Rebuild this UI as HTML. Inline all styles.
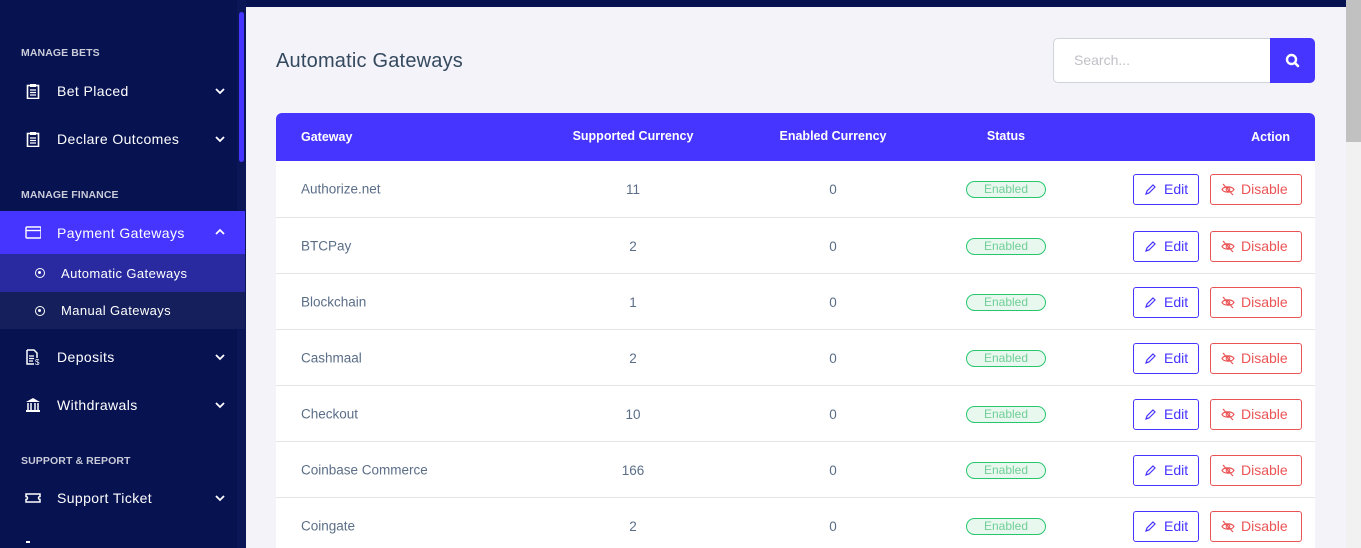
<!DOCTYPE html>
<html style="overflow:hidden"><head><meta charset="utf-8"><style>
*{box-sizing:border-box;margin:0;padding:0}
html,body{width:1361px;height:548px;overflow:hidden}
body{background:#f3f3f9;font-family:"Liberation Sans",sans-serif;position:relative}
.sb{position:absolute;left:0;top:0;width:246px;height:548px;background:#071251;color:#fff}
.sbtrack{position:absolute;left:237px;top:0;width:9px;height:548px;background:#0b1656}
.sbthumb{position:absolute;left:239px;top:12px;width:5px;height:150px;background:#4634ff;border-radius:3px}
.cap{position:absolute;left:21px;font-size:10.5px;font-weight:bold;color:#c9cbd8;letter-spacing:.1px}
.it{position:absolute;left:0;width:237px;height:42px;font-size:14px;color:#fff;display:flex;align-items:center}
.it .ic{position:absolute;left:25px;top:13px;width:16px;height:16px}
.it .t{position:absolute;left:57px;letter-spacing:.4px}
.it .ch{position:absolute;left:214px;top:15px;width:12px;height:12px}
.sub{position:absolute;left:0;width:245px;height:37px;font-size:13px;color:#fff;display:flex;align-items:center}
.sub .d{position:absolute;left:35px;width:10px;height:10px;border:1.5px solid #fff;border-radius:50%}
.sub .d:after{content:"";position:absolute;left:2px;top:2px;width:3px;height:3px;background:#fff;border-radius:50%}
.sub .t{position:absolute;left:61px;letter-spacing:.4px}
.topbar{position:absolute;left:246px;top:0;width:1100px;height:7px;background:#071251}
.vs{position:absolute;left:1346px;top:0;width:15px;height:548px;background:#f1f1f1}
.vs div{position:absolute;left:0;top:0;width:15px;height:142px;background:#c1c1c1}
h1{position:absolute;left:276px;top:50px;font-size:20px;font-weight:normal;color:#34495e;letter-spacing:.2px}
.search{position:absolute;left:1053px;top:38px;width:218px;height:45px;background:#fff;border:1px solid #ced4da;border-radius:5px 0 0 5px;font-size:14px;color:#c0c0c8;padding:13px 0 0 20px}
.sbtn{position:absolute;left:1270px;top:38px;width:45px;height:45px;background:#4634ff;border-radius:0 5px 5px 0}
.tbl{position:absolute;left:276px;top:113px;width:1039px;background:#fff;border-radius:6px 6px 0 0;overflow:hidden}
.hd{height:48px;background:#4634ff;color:#fff;font-size:12.5px;font-weight:bold;position:relative}
.hd span,.r span{position:absolute;top:50%;transform:translateY(-50%)}
.r{height:56px;border-top:1px solid #e5e5e5;position:relative;font-size:13.5px;color:#5b6e88}
.c1{left:25px}.c2{left:357px;width:0;text-align:center}.c2 b,.c3 b,.c4 b{font-weight:inherit;position:absolute;transform:translateX(-50%);white-space:nowrap;top:-8px}
.r .c2 b,.r .c3 b{top:-7px}
.c3{left:557px;width:0}.c4{left:730px;width:0}
.badge{position:absolute;left:690px;top:20px;width:80px;height:17px;border:1px solid #28c76f;background:#e8f8ef;border-radius:9px;color:#6fcf97;font-size:12px;text-align:center;line-height:15px}
.edit{position:absolute;left:857px;top:13px;width:66px;height:31px;border:1px solid #4634ff;border-radius:3px;color:#4634ff;font-size:14px;line-height:29px;padding-left:30px}
.dis{position:absolute;left:934px;top:13px;width:92px;height:31px;border:1px solid #ea5455;border-radius:3px;color:#ea5455;font-size:14px;line-height:29px;padding-left:30px}
.edit svg,.dis svg{position:absolute;left:10px;top:8px}
</style></head><body>
<div class="sb">
<div class="sbtrack"></div><div class="sbthumb"></div>
<div class="cap" style="top:47px">MANAGE BETS</div>
<div class="it" style="top:70px"><svg class="ic" viewBox="0 0 16 16"><rect x="2.5" y="2.5" width="11" height="13" fill="none" stroke="#fff" stroke-width="1.6"/><rect x="5" y="1" width="6" height="3" fill="#fff"/><path d="M5 7h6M5 9.5h6M5 12h6" stroke="#fff" stroke-width="1.2"/></svg><span class="t">Bet Placed</span><svg class="ch" viewBox="0 0 12 12"><path d="M2 4l4 4 4-4" fill="none" stroke="#fff" stroke-width="1.8"/></svg></div>
<div class="it" style="top:118px"><svg class="ic" viewBox="0 0 16 16"><rect x="2.5" y="2.5" width="11" height="13" fill="none" stroke="#fff" stroke-width="1.6"/><rect x="5" y="1" width="6" height="3" fill="#fff"/><path d="M5 7h6M5 9.5h6M5 12h6" stroke="#fff" stroke-width="1.2"/></svg><span class="t">Declare Outcomes</span><svg class="ch" viewBox="0 0 12 12"><path d="M2 4l4 4 4-4" fill="none" stroke="#fff" stroke-width="1.8"/></svg></div>
<div class="cap" style="top:189px">MANAGE FINANCE</div>
<div class="it" style="top:211px;height:43px;background:#4634ff;width:245px"><svg class="ic" viewBox="0 0 16 16"><rect x="1" y="3" width="15" height="11" rx="1" fill="none" stroke="#fff" stroke-width="1.4"/><path d="M1 6.5h15" stroke="#fff" stroke-width="1.4"/></svg><span class="t">Payment Gateways</span><svg class="ch" viewBox="0 0 12 12"><path d="M2 8l4-4 4 4" fill="none" stroke="#fff" stroke-width="1.8"/></svg></div>
<div class="sub" style="top:254px;height:38px;background:#2a2aa0"><span class="d"></span><span class="t">Automatic Gateways</span></div>
<div class="sub" style="top:292px;height:37px;background:#141f5b"><span class="d"></span><span class="t">Manual Gateways</span></div>
<div class="it" style="top:336px"><svg class="ic" viewBox="0 0 16 16"><path d="M2 1h7l3 3v5M2 1v14h7" fill="none" stroke="#fff" stroke-width="1.5"/><path d="M4 7h5M4 9.5h5M4 12h4" stroke="#fff" stroke-width="1.2"/><text x="10" y="16" font-size="8" fill="#fff" font-family="Liberation Sans">$</text></svg><span class="t">Deposits</span><svg class="ch" viewBox="0 0 12 12"><path d="M2 4l4 4 4-4" fill="none" stroke="#fff" stroke-width="1.8"/></svg></div>
<div class="it" style="top:384px"><svg class="ic" viewBox="0 0 16 16"><path d="M8 1L1 5h14z" fill="#fff"/><path d="M3 6v7M6 6v7M10 6v7M13 6v7" stroke="#fff" stroke-width="1.5"/><rect x="1" y="13" width="14" height="2" fill="#fff"/></svg><span class="t">Withdrawals</span><svg class="ch" viewBox="0 0 12 12"><path d="M2 4l4 4 4-4" fill="none" stroke="#fff" stroke-width="1.8"/></svg></div>
<div class="cap" style="top:455px">SUPPORT &amp; REPORT</div>
<div class="it" style="top:477px"><svg class="ic" viewBox="0 0 16 16"><path d="M1 4h14v2.5a1.5 1.5 0 000 3V12H1V9.5a1.5 1.5 0 000-3z" fill="none" stroke="#fff" stroke-width="1.5"/></svg><span class="t">Support Ticket</span><svg class="ch" viewBox="0 0 12 12"><path d="M2 4l4 4 4-4" fill="none" stroke="#fff" stroke-width="1.8"/></svg></div>
<div style="position:absolute;left:26px;top:541px;width:4px;height:1.5px;background:#fff"></div>
</div>
<div class="topbar"></div>
<div class="vs"><div></div></div>
<h1>Automatic Gateways</h1>
<div class="search">Search...</div>
<div class="sbtn"><svg width="45" height="45" viewBox="0 0 45 45"><circle cx="21.5" cy="21.5" r="4.5" fill="none" stroke="#fff" stroke-width="2.4"/><path d="M25 25l3 3" stroke="#fff" stroke-width="2.6" stroke-linecap="round"/></svg></div>
<div class="tbl">
<div class="hd"><span class="c1">Gateway</span><span class="c2"><b>Supported Currency</b></span><span class="c3"><b>Enabled Currency</b></span><span class="c4"><b>Status</b></span><span style="right:25px">Action</span></div>
</div>
<div style="position:absolute;left:276px;top:161px;width:1039px;height:387px;overflow:hidden"><div id="rows" style="background:#fff"></div></div>
<script>
var d=[["Authorize.net","11"],["BTCPay","2"],["Blockchain","1"],["Cashmaal","2"],["Checkout","10"],["Coinbase Commerce","166"],["Coingate","2"]];
var h="";d.forEach(function(x,i){h+='<div class="r" style="'+(i==0?'border-top:none;':'')+'"><span class="c1">'+x[0]+'</span><span class="c2"><b>'+x[1]+'</b></span><span class="c3"><b>0</b></span><div class="badge">Enabled</div><div class="edit"><svg width="13" height="13" viewBox="0 0 13 13"><path d="M2 11l1-3 6-6 2 2-6 6z" fill="none" stroke="#4634ff" stroke-width="1.2"/></svg>Edit</div><div class="dis"><svg width="14" height="13" viewBox="0 0 14 13"><path d="M1 6.5C3 3 11 3 13 6.5 11 10 3 10 1 6.5z" fill="none" stroke="#ea5455" stroke-width="1.2"/><circle cx="7" cy="6.5" r="1.8" fill="none" stroke="#ea5455" stroke-width="1.1"/><path d="M2 1l10 11" stroke="#ea5455" stroke-width="1.2"/></svg>Disable</div></div>'});
document.getElementById("rows").innerHTML=h;
</script>
</body></html>
